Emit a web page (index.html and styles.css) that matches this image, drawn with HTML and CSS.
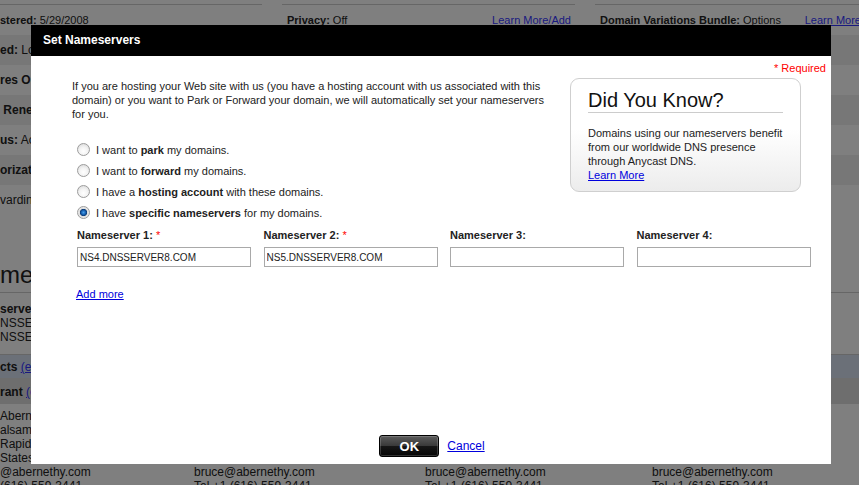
FILE: index.html
```html
<!DOCTYPE html>
<html>
<head>
<meta charset="utf-8">
<title>Set Nameservers</title>
<link rel="stylesheet" href="styles.css">
</head>
<body>
<div class="page">
  <div class="summary">
    <div class="cell"><span><b>stered:</b> 5/29/2008</span></div>
    <div class="cell"><span><b>Privacy:</b> Off</span><a href="#">Learn More/Add</a></div>
    <div class="cell"><span><b>Domain Variations Bundle:</b> Options</span><a href="#">Learn More</a></div>
  </div>
  <div class="details">
    <div class="drow alt"><b>ed:</b> Locked</div>
    <div class="drow"><b>res On:</b> 5/29/2009</div>
    <div class="drow alt"><b>&nbsp;Renew:</b> On</div>
    <div class="drow"><b>us:</b> Active</div>
    <div class="drow alt"><b>orization:</b> Send by Email</div>
    <div class="drow">varding: Off</div>
  </div>
  <div class="ns-heading">meservers</div>
  <div class="ns-block">
    <div><b>servers:</b></div>
    <div>NSSERVER4.DNSSERVER8.COM</div>
    <div>NSSERVER5.DNSSERVER8.COM</div>
  </div>
  <div class="band band-blue"><b>cts</b> <a href="#">(edit)</a></div>
  <div class="band band-gray"><b>rant</b> <a href="#">(edit)</a></div>
  <div class="contacts">
    <div class="ccol">
      <div>Abernethy</div>
      <div>alsam Ave.</div>
      <div>Rapids, MI</div>
      <div>States</div>
      <div>@abernethy.com</div>
      <div>(616) 559-3441</div>
    </div>
    <div class="ccol">
      <div>Bruce Abernethy</div>
      <div>1234 Balsam Ave.</div>
      <div>Grand Rapids, MI 49503</div>
      <div>United States</div>
      <div>bruce@abernethy.com</div>
      <div>Tel +1 (616) 559-3441</div>
    </div>
    <div class="ccol">
      <div>Bruce Abernethy</div>
      <div>1234 Balsam Ave.</div>
      <div>Grand Rapids, MI 49503</div>
      <div>United States</div>
      <div>bruce@abernethy.com</div>
      <div>Tel +1 (616) 559-3441</div>
    </div>
    <div class="ccol">
      <div>Bruce Abernethy</div>
      <div>1234 Balsam Ave.</div>
      <div>Grand Rapids, MI 49503</div>
      <div>United States</div>
      <div>bruce@abernethy.com</div>
      <div>Tel +1 (616) 559-3441</div>
    </div>
  </div>
</div>

<div class="overlay"></div>

<div class="dialog">
  <div class="dlg-head">Set Nameservers</div>
  <div class="dlg-body">
    <div class="req"><span class="star">*</span> Required</div>
    <div class="top">
      <div class="main-col">
        <p class="intro">If you are hosting your Web site with us (you have a hosting account with us associated with this domain) or you want to Park or Forward your domain, we will automatically set your nameservers for you.</p>
        <ul class="choices">
          <li><label><input type="radio" name="ns">I want to <b>park</b> my domains.</label></li>
          <li><label><input type="radio" name="ns">I want to <b>forward</b> my domains.</label></li>
          <li><label><input type="radio" name="ns">I have a <b>hosting account</b> with these domains.</label></li>
          <li><label><input type="radio" name="ns" checked>I have <b>specific nameservers</b> for my domains.</label></li>
        </ul>
      </div>
      <div class="dyk">
        <div class="dyk-title">Did You Know?</div>
        <p class="dyk-text">Domains using our nameservers benefit from our worldwide DNS presence through Anycast DNS.<br><a href="#">Learn More</a></p>
      </div>
    </div>
    <div class="ns-grid">
      <div class="ns-field"><label>Nameserver 1: <span class="star">*</span></label><input type="text" value="NS4.DNSSERVER8.COM"></div>
      <div class="ns-field"><label>Nameserver 2: <span class="star">*</span></label><input type="text" value="NS5.DNSSERVER8.COM"></div>
      <div class="ns-field"><label>Nameserver 3:</label><input type="text" value=""></div>
      <div class="ns-field"><label>Nameserver 4:</label><input type="text" value=""></div>
    </div>
    <a class="add-more" href="#">Add more</a>
  </div>
  <div class="dlg-foot">
    <button class="ok" type="button">OK</button>
    <a class="cancel" href="#">Cancel</a>
  </div>
</div>
</body>
</html>
```

FILE: styles.css
```css
* { box-sizing: border-box; }
html, body { margin: 0; padding: 0; }
body {
  width: 859px;
  height: 485px;
  overflow: hidden;
  position: relative;
  background: #fff;
  font-family: "Liberation Sans", Arial, sans-serif;
  color: #222;
}

/* ---------- background page ---------- */
.page {
  height: 485px;
  overflow: hidden;
  font-size: 12px;
  color: #222;
  white-space: nowrap;
}
.page a { color: #3333ff; }
.summary {
  display: grid;
  grid-template-columns: 262px 293px 270px;
  column-gap: 20px;
  margin-top: 4px;
  height: 31px;
}
.summary .cell {
  border-top: 1px solid #ccc;
  display: flex;
  justify-content: space-between;
  padding: 8px 4px 0 5px;
  font-size: 11px;
  line-height: 14px;
}
.summary .cell:first-child { padding-left: 0; }

.details .drow {
  height: 30px;
  line-height: 30px;
}
.details .alt { background: #eee; }

.ns-heading {
  font-size: 24px;
  line-height: 28px;
  padding-top: 46px;
  height: 78px;
  border-bottom: 1px solid #ccc;
}
.ns-block {
  height: 61px;
  padding-top: 9px;
  line-height: 14px;
}
.band {
  line-height: 14px;
}
.band-blue {
  border-top: 1px solid #ccc;
  background: #d6e0f0;
  height: 24px;
  padding-top: 5px;
}
.band-gray {
  background: #dcdcdc;
  height: 26px;
  padding-top: 7px;
}
.contacts {
  display: grid;
  grid-template-columns: 194px 231px 227px 1fr;
  padding-top: 5px;
  line-height: 14px;
}

.overlay {
  position: absolute;
  inset: 0;
  background: rgba(0, 0, 0, 0.5);
}

/* ---------- dialog ---------- */
.dialog {
  position: absolute;
  left: 31px;
  top: 25px;
  width: 800px;
  height: 439px;
  background: #fff;
  display: flex;
  flex-direction: column;
}
.dlg-head {
  height: 31px;
  background: #000;
  color: #fff;
  font-weight: bold;
  font-size: 12px;
  line-height: 31px;
  padding-left: 12px;
}
.dlg-body {
  padding: 0 5px 0 41px;
  font-size: 11px;
  color: #222;
}
.star { color: #f00; }
.req {
  margin-top: 6px;
  line-height: 13px;
  text-align: right;
  color: #f00;
}
.top {
  display: flex;
  align-items: flex-start;
  justify-content: space-between;
}
.main-col { width: 480px; }
.intro {
  margin: 4px 0 0;
  line-height: 14px;
}
.choices {
  list-style: none;
  margin: 18px 0 0;
  padding: 0 0 0 5px;
}
.choices li {
  height: 21px;
  display: flex;
  align-items: center;
}
.choices label {
  display: flex;
  align-items: center;
  white-space: pre;
}
.choices input {
  -webkit-appearance: none;
  appearance: none;
  width: 13px;
  height: 13px;
  margin: 0 6px 0 0;
  border: 1px solid #9c9c9c;
  border-radius: 50%;
  background: radial-gradient(circle at 50% 65%, #fff 0, #f3f3f3 45%, #d4d4d4 100%);
  flex: none;
}
.choices input:checked {
  background: radial-gradient(circle at 50% 50%, #4aa0e8 0, #1d6bbf 1.8px, #0b3c78 3.3px, #dedede 4px, #fff 100%);
}

.dyk {
  width: 231px;
  margin: 3px 25px 0 0;
  border: 1px solid #cfcfcf;
  border-radius: 9px;
  background: linear-gradient(#fff 45%, #ececec);
  padding: 9px 17px 9px 17px;
}
.dyk-title {
  font-size: 20px;
  line-height: 24px;
  color: #111;
  border-bottom: 1px solid #ccc;
}
.dyk-text {
  margin: 13px 0 0;
  line-height: 14px;
  font-size: 11px;
  color: #222;
}
.dyk-text a, .add-more, .cancel { color: #0000dd; }

.ns-grid {
  display: grid;
  grid-template-columns: repeat(4, 174px);
  column-gap: 12.5px;
  margin: 6px 0 0 5px;
}
.ns-field label {
  display: block;
  font-weight: bold;
  line-height: 13px;
  color: #222;
}
.ns-field label .star { font-weight: normal; }
.ns-field input {
  display: block;
  width: 174px;
  height: 20px;
  margin-top: 5px;
  border: 1px solid #a9a9a9;
  padding: 0 2px;
  font-family: "Liberation Sans", Arial, sans-serif;
  font-size: 10px;
  color: #222;
  outline: none;
}
.add-more {
  display: inline-block;
  margin: 21px 0 0 4px;
  line-height: 13px;
}

.dlg-foot {
  margin-top: auto;
  padding: 0 0 7px 2px;
  display: flex;
  justify-content: center;
  align-items: center;
  gap: 8px;
}
.ok {
  width: 60px;
  height: 22px;
  padding: 0;
  border: 1px solid #000;
  border-radius: 3px;
  background: linear-gradient(#5c5c5c, #3a3a3a 48%, #161616 52%, #050505);
  box-shadow: inset 0 0 0 1px rgba(255, 255, 255, 0.18);
  color: #fff;
  font-family: "Liberation Sans", Arial, sans-serif;
  font-weight: bold;
  font-size: 13px;
}
.cancel {
  font-size: 12px;
  line-height: 14px;
}
```
